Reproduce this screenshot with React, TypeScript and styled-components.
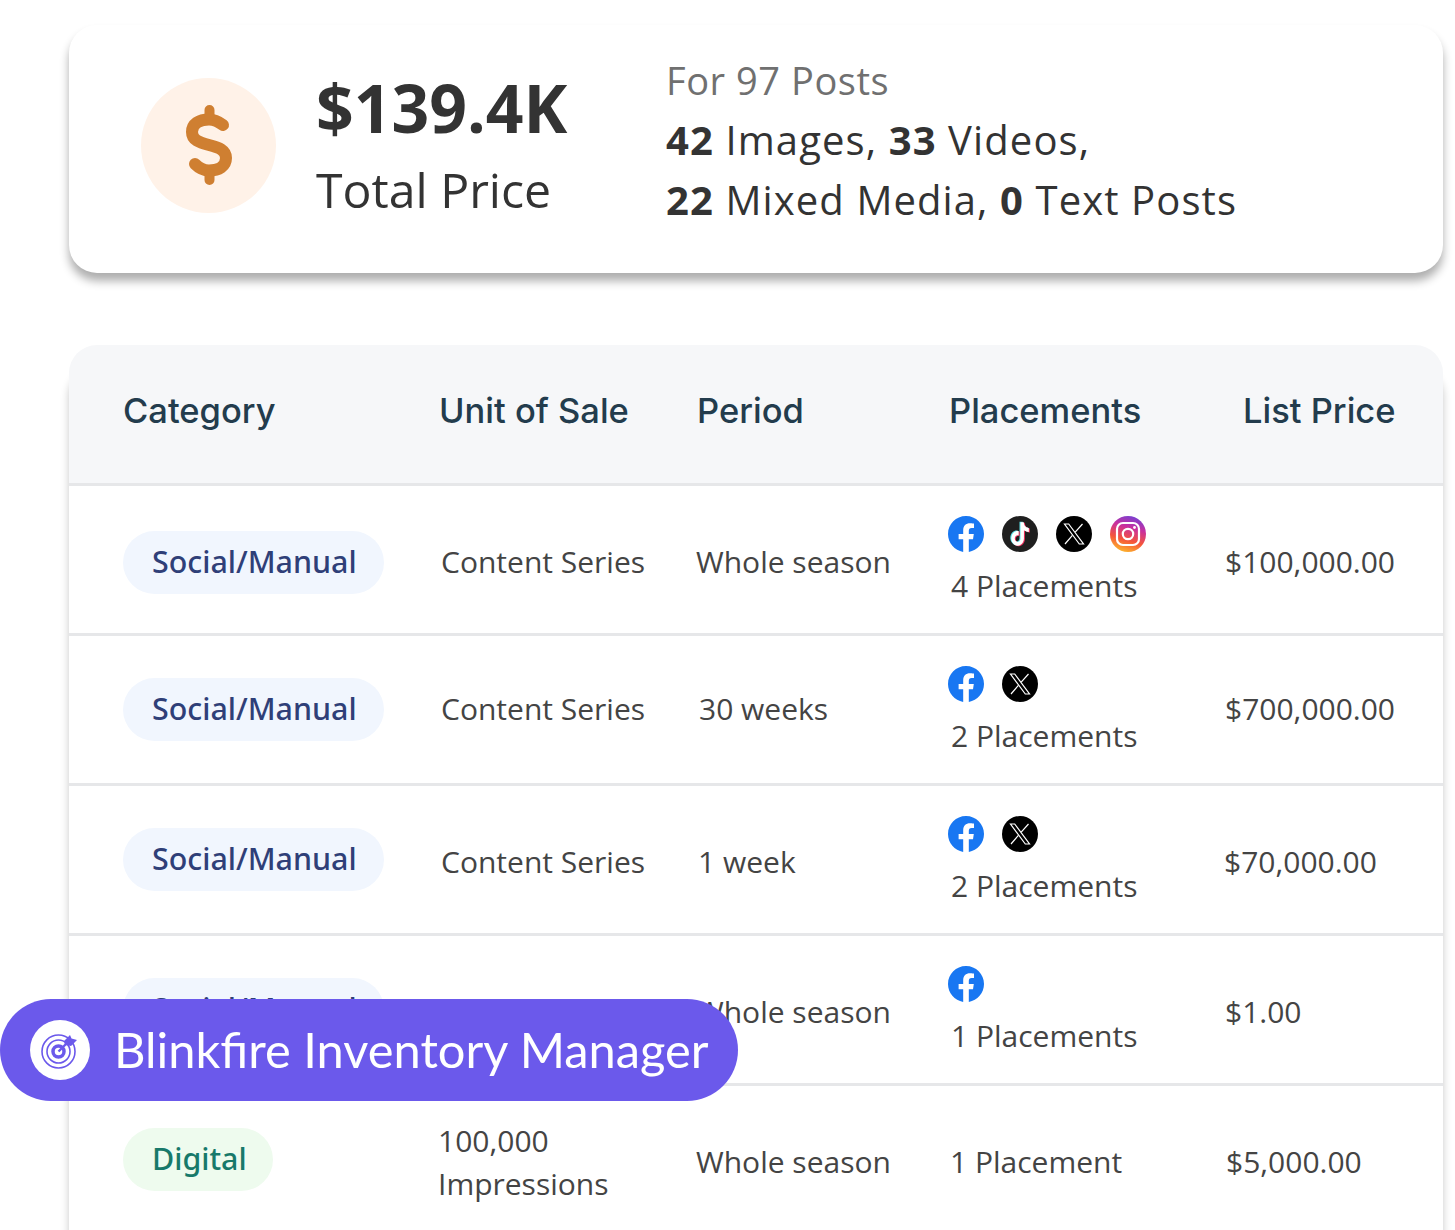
import React from "react";
import styled, { createGlobalStyle } from "styled-components";

const GlobalStyle = createGlobalStyle`
  html, body {
    margin: 0;
    padding: 0;
    background: #fff;
  }
`;

const Page = styled.div`
  position: relative;
  width: 1455px;
  height: 1230px;
  overflow: hidden;
  padding: 25px 12px 0 69px;
  box-sizing: border-box;
  font-family: "Open Sans", sans-serif;
  color: #333;
`;

const SummaryCard = styled.section`
  display: flex;
  align-items: center;
  height: 248px;
  padding: 0 0 0 72px;
  box-sizing: border-box;
  border-radius: 28px;
  background: #fff;
  box-shadow: 0 8px 10px rgba(0, 0, 0, 0.32);
`;

const CoinBadge = styled.div`
  display: flex;
  align-items: center;
  justify-content: center;
  width: 135px;
  height: 135px;
  margin-bottom: 8px;
  border-radius: 50%;
  background: #fff2e8;
  flex: none;
`;

const TotalBlock = styled.div`
  margin-left: 40px;
  margin-bottom: 3px;
  width: 350px;
  flex: none;
`;

const TotalValue = styled.div`
  font-size: 66px;
  line-height: 82px;
  font-weight: 700;
`;

const TotalLabel = styled.div`
  font-size: 48.2px;
  line-height: 82px;
`;

const PostBlock = styled.div`
  font-size: 40px;
  line-height: 60px;
  letter-spacing: 1.1px;
  margin-bottom: 17px;
`;

const PostHeading = styled.div`
  color: #707070;
  font-size: 38px;
  line-height: 59px;
  letter-spacing: 0.55px;
`;

const TableCard = styled.section`
  margin-top: 72px;
  height: 900px;
  border-radius: 28px 28px 0 0;
  background: #fff;
  box-shadow: 0 24px 8px rgba(0, 0, 0, 0.22);
  overflow: hidden;
`;

const HeadRow = styled.div`
  display: grid;
  grid-template-columns: 316px 258px 252px 294px 1fr;
  align-items: center;
  height: 141px;
  padding: 0 0 8px 54px;
  background: #f6f7f9;
  border-bottom: 3px solid #e6e7e9;
  box-sizing: border-box;
  font-family: Inter, sans-serif;
  font-size: 34.5px;
  font-weight: 500;
  color: #233c4d;
  white-space: nowrap;
`;

const Row = styled.div`
  display: grid;
  grid-template-columns: 315px 258px 252px 276px 1fr;
  align-items: center;
  height: 150px;
  padding-left: 54px;
  border-bottom: 3px solid #e6e7e9;
  box-sizing: border-box;
  font-size: 30px;
  color: #444;
  white-space: nowrap;
`;

const PillSlot = styled.div<{ $shift?: number }>`
  padding-top: ${({ $shift }) => ($shift ?? 0) * 2}px;
`;

const Pill = styled.span<{ $digital?: boolean }>`
  display: inline-block;
  padding: 0 ${({ $digital }) => ($digital ? 26 : 27)}px 0 29px;
  height: 63px;
  line-height: 61px;
  border-radius: 32px;
  font-family: "Noto Sans", sans-serif;
  font-size: 30.4px;
  font-weight: 500;
  background: ${({ $digital }) => ($digital ? "#eefbee" : "#f1f6fe")};
  color: ${({ $digital }) => ($digital ? "#17796a" : "#2f3f78")};
`;

const Cell = styled.div<{ $nudge?: number; $shift?: number }>`
  padding-left: ${({ $nudge }) => $nudge ?? 0}px;
  padding-top: ${({ $shift }) => Math.max($shift ?? 0, 0) * 2}px;
  padding-bottom: ${({ $shift }) => Math.max(-($shift ?? 0), 0) * 2}px;
`;

const ImpressionText = styled.div`
  line-height: 43px;
  margin-top: 4px;
`;

const PlacementCell = styled.div`
  padding-top: 3px;
`;

const IconRow = styled.div`
  display: flex;
  gap: 18px;
  height: 36px;
  margin-bottom: 13px;
`;

const Banner = styled.div`
  position: absolute;
  left: 0;
  top: 999px;
  display: flex;
  align-items: center;
  width: 738px;
  height: 102px;
  padding-left: 30px;
  box-sizing: border-box;
  border-radius: 51px;
  background: #6b59eb;
  color: #fff;
  font-family: Lato, sans-serif;
  font-size: 48.8px;
`;

const BannerLabel = styled.span`
  padding-bottom: 2px;
`;

const BannerIcon = styled.div`
  display: flex;
  align-items: center;
  justify-content: center;
  width: 60px;
  height: 60px;
  margin-right: 24px;
  border-radius: 50%;
  background: #fff;
`;

function FacebookIcon() {
  return (
    <svg width="36" height="36" viewBox="0 0 24 24">
      <circle cx="12" cy="12" r="11" fill="#fff" />
      <path
        fill="#1877f2"
        d="M24 12.073c0-6.627-5.373-12-12-12s-12 5.373-12 12c0 5.99 4.388 10.954 10.125 11.854v-8.385H7.078v-3.47h3.047V9.43c0-3.007 1.792-4.669 4.533-4.669 1.312 0 2.686.235 2.686.235v2.953H15.83c-1.491 0-1.956.925-1.956 1.874v2.25h3.328l-.532 3.47h-2.796v8.385C19.612 23.027 24 18.062 24 12.073z"
      />
    </svg>
  );
}

const tiktokNote =
  "M12.525.02c1.31-.02 2.61-.01 3.91-.02.08 1.53.63 3.09 1.75 4.17 1.12 1.11 2.7 1.62 4.24 1.79v4.03c-1.44-.05-2.89-.35-4.2-.97-.57-.26-1.1-.59-1.62-.93-.01 2.92.01 5.84-.02 8.75-.08 1.4-.54 2.79-1.35 3.94-1.31 1.92-3.58 3.17-5.91 3.21-1.43.08-2.86-.31-4.08-1.03-2.02-1.19-3.44-3.37-3.65-5.71-.02-.5-.03-1-.01-1.49.18-1.9 1.12-3.72 2.58-4.96 1.66-1.44 3.98-2.13 6.15-1.72.02 1.48-.04 2.96-.04 4.44-.99-.32-2.15-.23-3.02.37-.63.41-1.11 1.04-1.36 1.75-.21.51-.15 1.07-.14 1.61.24 1.64 1.82 3.02 3.5 2.87 1.12-.01 2.19-.66 2.77-1.61.19-.33.4-.67.41-1.06.1-1.79.06-3.57.07-5.36.01-4.03-.01-8.05.02-12.07z";

function TikTokIcon() {
  return (
    <svg width="36" height="36" viewBox="0 0 36 36">
      <circle cx="18" cy="18" r="18" fill="#1f1f1f" />
      <g transform="translate(8 6.2) scale(0.84 0.98)">
        <path fill="#5fe3ec" d={tiktokNote} transform="translate(-1.2 -0.5)" />
        <path fill="#f0305f" d={tiktokNote} transform="translate(1.2 0.5)" />
        <path fill="#fff" d={tiktokNote} />
      </g>
    </svg>
  );
}

function XIcon() {
  return (
    <svg width="36" height="36" viewBox="0 0 36 36">
      <circle cx="18" cy="18" r="18" fill="#000" />
      <g fill="none" stroke="#fff" strokeWidth="1.2">
        <path d="M8.5 8h4.2l14.8 20h-4.2z" />
        <path d="M26.5 8l-7.3 8.2M16.4 19.4L9 28" />
      </g>
    </svg>
  );
}

function InstagramIcon() {
  return (
    <svg width="36" height="36" viewBox="0 0 36 36">
      <defs>
        <linearGradient id="igGrad" x1="0.3" y1="1" x2="0.6" y2="0">
          <stop offset="0" stopColor="#fdb92c" />
          <stop offset="0.35" stopColor="#f5553a" />
          <stop offset="0.7" stopColor="#c9309f" />
          <stop offset="1" stopColor="#7a3fd0" />
        </linearGradient>
      </defs>
      <circle cx="18" cy="18" r="18" fill="url(#igGrad)" />
      <rect x="7" y="7" width="22" height="22" rx="6" fill="none" stroke="#fff" strokeWidth="2.2" />
      <circle cx="18" cy="18" r="5.2" fill="none" stroke="#fff" strokeWidth="2.2" />
      <circle cx="24.5" cy="11.5" r="1.4" fill="#fff" />
    </svg>
  );
}

function DollarIcon() {
  return (
    <svg width="48" height="82" viewBox="0 0 48 82">
      <g fill="none" stroke="#cf7f31" strokeLinecap="round">
        <path
          strokeWidth="12"
          d="M38 21C34 18 29 15.5 24 15.5C14 15.5 7 20 7 28C7 36 14 38.5 24 41C34 43.5 41 46 41 54C41 62 34 66.5 24 66.5C19 66.5 14 64 10 60"
        />
        <path strokeWidth="10" d="M24.5 6V12M24.5 70V76" />
      </g>
    </svg>
  );
}

function TargetIcon() {
  return (
    <svg width="38" height="38" viewBox="0 0 38 38">
      <g fill="none" stroke="#6b59eb" strokeWidth="1.6">
        <circle cx="17.5" cy="20.5" r="16.5" />
        <circle cx="17.5" cy="20.5" r="11.5" />
      </g>
      <circle cx="17.5" cy="20.5" r="5.5" fill="none" stroke="#6b59eb" strokeWidth="3.5" />
      <path d="M17.5 20.5L29 9" stroke="#6b59eb" strokeWidth="2.4" />
      <path fill="#6b59eb" d="M23 10l6-6 1.5 3.5L36 9l-6 6-6-1z" />
    </svg>
  );
}

type RowData = {
  category: string;
  digital?: boolean;
  pillShift: number;
  unit?: string;
  period: string;
  periodNudge: number;
  textShift: number;
  icons: React.ReactNode[];
  placements: string;
  price: string;
  priceNudge: number;
};

const rows: RowData[] = [
  {
    category: "Social/Manual",
    pillShift: 3,
    unit: "Content Series",
    period: "Whole season",
    periodNudge: 0,
    textShift: 2,
    icons: [<FacebookIcon key="fb" />, <TikTokIcon key="tt" />, <XIcon key="x" />, <InstagramIcon key="ig" />],
    placements: "4 Placements",
    price: "$100,000.00",
    priceNudge: 1,
  },
  {
    category: "Social/Manual",
    pillShift: 0,
    unit: "Content Series",
    period: "30 weeks",
    periodNudge: 3,
    textShift: -1,
    icons: [<FacebookIcon key="fb" />, <XIcon key="x" />],
    placements: "2 Placements",
    price: "$700,000.00",
    priceNudge: 1,
  },
  {
    category: "Social/Manual",
    pillShift: 0,
    unit: "Content Series",
    period: "1 week",
    periodNudge: 2,
    textShift: 2,
    icons: [<FacebookIcon key="fb" />, <XIcon key="x" />],
    placements: "2 Placements",
    price: "$70,000.00",
    priceNudge: 0,
  },
  {
    category: "Social/Manual",
    pillShift: 0,
    period: "Whole season",
    periodNudge: 0,
    textShift: 2,
    icons: [<FacebookIcon key="fb" />],
    placements: "1 Placements",
    price: "$1.00",
    priceNudge: 1,
  },
  {
    category: "Digital",
    digital: true,
    pillShift: 0,
    period: "Whole season",
    periodNudge: 0,
    textShift: 2,
    icons: [],
    placements: "1 Placement",
    price: "$5,000.00",
    priceNudge: 2,
  },
];

export default function App() {
  return (
    <Page>
      <GlobalStyle />
      <SummaryCard>
        <CoinBadge>
          <DollarIcon />
        </CoinBadge>
        <TotalBlock>
          <TotalValue>$139.4K</TotalValue>
          <TotalLabel>Total Price</TotalLabel>
        </TotalBlock>
        <PostBlock>
          <PostHeading>For 97 Posts</PostHeading>
          <div>
            <b>42</b> Images, <b>33</b> Videos,
          </div>
          <div>
            <b>22</b> Mixed Media, <b>0</b> Text Posts
          </div>
        </PostBlock>
      </SummaryCard>
      <TableCard>
        <HeadRow>
          <span>Category</span>
          <span>Unit of Sale</span>
          <span>Period</span>
          <span>Placements</span>
          <span>List Price</span>
        </HeadRow>
        {rows.map((row, i) => (
          <Row key={i}>
            <PillSlot $shift={row.pillShift}>
              <Pill $digital={row.digital}>{row.category}</Pill>
            </PillSlot>
            {row.unit ? (
              <Cell $nudge={3} $shift={row.textShift}>
                {row.unit}
              </Cell>
            ) : row.digital ? (
              <ImpressionText>
                100,000
                <br />
                Impressions
              </ImpressionText>
            ) : (
              <div />
            )}
            <Cell $nudge={row.periodNudge} $shift={row.textShift}>
              {row.period}
            </Cell>
            {row.icons.length > 0 ? (
              <PlacementCell>
                <IconRow>{row.icons}</IconRow>
                <Cell $nudge={3}>{row.placements}</Cell>
              </PlacementCell>
            ) : (
              <Cell $nudge={2} $shift={row.textShift}>
                {row.placements}
              </Cell>
            )}
            <Cell $nudge={row.priceNudge} $shift={row.textShift}>
              {row.price}
            </Cell>
          </Row>
        ))}
      </TableCard>
      <Banner>
        <BannerIcon>
          <TargetIcon />
        </BannerIcon>
        <BannerLabel>Blinkfire Inventory Manager</BannerLabel>
      </Banner>
    </Page>
  );
}
